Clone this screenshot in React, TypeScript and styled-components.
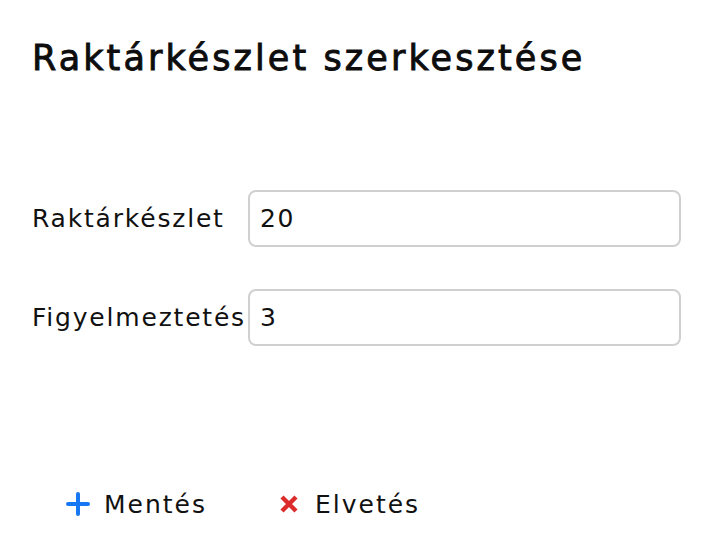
import React from "react";
import styled, { createGlobalStyle } from "styled-components";

const Global = createGlobalStyle`
  html, body { margin: 0; padding: 0; background: #ffffff; }
  body { font-family: "DejaVu Sans", "Noto Sans", sans-serif; color: #111111; }
  * { box-sizing: border-box; }
`;

const Page = styled.div`
  display: flex;
  flex-direction: column;
  padding: 0 30px 0 32px;
`;

const Title = styled.h1`
  margin: 36px 0 0;
  font-size: 35px;
  line-height: 44px;
  font-weight: 400;
  -webkit-text-stroke: 0.9px #0d0d0d;
  letter-spacing: 3.1px;
  color: #0d0d0d;
  white-space: nowrap;
`;

const Form = styled.div`
  display: flex;
  flex-direction: column;
  gap: 42px;
  margin-top: 110px;
`;

const Row = styled.div`
  display: grid;
  grid-template-columns: 216px 1fr;
  align-items: center;
`;

const Label = styled.label`
  font-size: 25px;
  letter-spacing: 1.8px;
  white-space: nowrap;
  color: #111111;
`;

const Input = styled.input`
  height: 57px;
  width: 100%;
  border: 2px solid #d0d0d0;
  border-radius: 8px;
  padding: 0 10px;
  font-family: inherit;
  font-size: 25px;
  letter-spacing: 1.6px;
  color: #111111;
  background: #ffffff;
  outline: none;
`;

const Footer = styled.div`
  display: flex;
  align-items: center;
  gap: 72px;
  margin-top: 143px;
  padding-left: 34px;
`;

const Button = styled.button<{ $gap: number }>`
  display: flex;
  align-items: center;
  gap: ${(p) => p.$gap}px;
  height: 30px;
  padding: 0;
  border: none;
  background: transparent;
  font-family: inherit;
  font-size: 25px;
  letter-spacing: 2px;
  color: #111111;
  cursor: pointer;
`;

const PlusIcon = () => (
  <svg width="24" height="24" viewBox="0 0 24 24">
    <path d="M12 2 V22 M2 12 H22" stroke="#1877f2" strokeWidth="4" strokeLinecap="round" fill="none" />
  </svg>
);

const CrossIcon = () => (
  <svg width="20" height="20" viewBox="0 0 20 20">
    <path d="M3 3 L17 17 M17 3 L3 17" stroke="#dc2b2b" strokeWidth="4.4" strokeLinecap="butt" fill="none" />
  </svg>
);

export default function App() {
  return (
    <>
      <Global />
      <Page>
        <Title>Raktárkészlet szerkesztése</Title>
        <Form>
          <Row>
            <Label>Raktárkészlet</Label>
            <Input defaultValue="20" />
          </Row>
          <Row>
            <Label>Figyelmeztetés</Label>
            <Input defaultValue="3" />
          </Row>
        </Form>
        <Footer>
          <Button $gap={14}>
            <PlusIcon />
            Mentés
          </Button>
          <Button $gap={16}>
            <CrossIcon />
            Elvetés
          </Button>
        </Footer>
      </Page>
    </>
  );
}
